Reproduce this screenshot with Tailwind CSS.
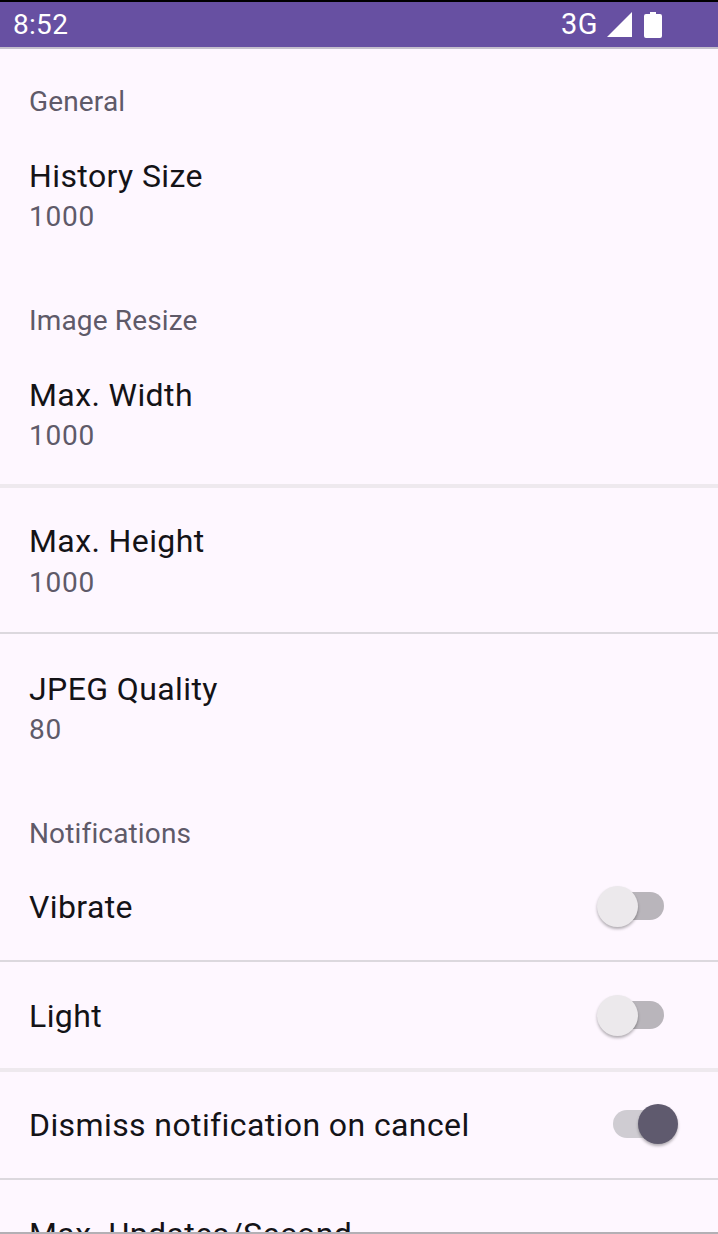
<!DOCTYPE html>
<html lang="en">
<head>
  <meta charset="UTF-8">
  <title>Settings</title>
  <script src="https://cdn.jsdelivr.net/npm/@tailwindcss/browser@4"></script>
</head>
<body class="relative h-[1234px] overflow-hidden bg-[#fef7ff] font-['Roboto',sans-serif]">

  <!-- Status bar -->
  <div class="h-[49px] border-t-2 border-b-2 border-t-black border-b-[#c4bfcc] bg-[#6750a2] flex items-center pl-[13px] text-white text-[28px]">
    <span class="flex-1 tracking-[0.3px]">8:52</span>
    <span class="text-[29px] tracking-[0.5px]">3G</span>
    <svg class="ml-[9px]" width="26" height="26" viewBox="0 0 26 26"><path d="M25 0V25H0Z" fill="#fff"/></svg>
    <svg class="ml-[11px] mr-[56px]" width="18" height="26" viewBox="0 0 18 26"><path d="M6 0H12V2H16Q18 2 18 4V24Q18 26 16 26H2Q0 26 0 24V4Q0 2 2 2H6Z" fill="#fff"/></svg>
  </div>

  <!-- General -->
  <div class="h-[73px] pl-[29px] pt-[35px] text-[#5f5a69] text-[28px] leading-[36px] tracking-[0.15px]">General</div>
  <div class="h-[146px] pl-[29px] pt-[34px]">
    <div class="text-[#141317] text-[32px] leading-[40px] tracking-[0.4px]">History Size</div>
    <div class="mt-px text-[#5f5a69] text-[28px] leading-[40px] tracking-[0.8px]">1000</div>
  </div>

  <!-- Image Resize -->
  <div class="h-[73px] pl-[29px] pt-[35px] text-[#5f5a69] text-[28px] leading-[36px] tracking-[0.15px]">Image Resize</div>
  <div class="h-[143px] pl-[29px] pt-[34px]">
    <div class="text-[#141317] text-[32px] leading-[40px] tracking-[0.4px]">Max. Width</div>
    <div class="mt-px text-[#5f5a69] text-[28px] leading-[40px] tracking-[0.8px]">1000</div>
  </div>
  <div class="h-[4px] bg-[#eee9ee]"></div>
  <div class="h-[144px] pl-[29px] pt-[33px]">
    <div class="text-[#141317] text-[32px] leading-[40px] tracking-[0.4px]">Max. Height</div>
    <div class="mt-[2px] text-[#5f5a69] text-[28px] leading-[40px] tracking-[0.8px]">1000</div>
  </div>
  <div class="h-[2px] bg-[#dcd8de]"></div>
  <div class="h-[146px] pl-[29px] pt-[35px]">
    <div class="text-[#141317] text-[32px] leading-[40px] tracking-[0.4px]">JPEG Quality</div>
    <div class="mt-px text-[#5f5a69] text-[28px] leading-[40px] tracking-[0.8px]">80</div>
  </div>

  <!-- Notifications -->
  <div class="h-[73px] pl-[29px] pt-[36px] text-[#5f5a69] text-[28px] leading-[36px] tracking-[0.15px]">Notifications</div>
  <div class="h-[107px] pl-[29px] flex items-center justify-between">
    <span class="text-[#141317] text-[32px] tracking-[0.4px]">Vibrate</span>
    <div class="relative w-[51px] h-[28px] mr-[54px] -mt-[2px] rounded-full bg-[#b9b5bb]">
      <div class="absolute -left-[16px] -top-[6px] w-[41px] h-[41px] rounded-full bg-[#ece9ec] shadow-[0_2px_3px_rgba(0,0,0,0.3)]"></div>
    </div>
  </div>
  <div class="h-[2px] bg-[#dcd8de]"></div>
  <div class="h-[106px] pl-[29px] flex items-center justify-between">
    <span class="mt-[2px] text-[#141317] text-[32px] tracking-[0.4px]">Light</span>
    <div class="relative w-[51px] h-[28px] mr-[54px] rounded-full bg-[#b9b5bb]">
      <div class="absolute -left-[16px] -top-[6px] w-[41px] h-[41px] rounded-full bg-[#ece9ec] shadow-[0_2px_3px_rgba(0,0,0,0.3)]"></div>
    </div>
  </div>
  <div class="h-[4px] bg-[#eee9ee]"></div>
  <div class="h-[106px] pl-[29px] flex items-center justify-between">
    <span class="text-[#141317] text-[32px] tracking-[0.4px]">Dismiss notification on cancel</span>
    <div class="relative w-[51px] h-[28px] mr-[54px] -mt-[2px] rounded-full bg-[#cfccd2]">
      <div class="absolute left-[25px] -top-[6px] w-[40px] h-[40px] rounded-full bg-[#5f5a6e] shadow-[0_2px_3px_rgba(0,0,0,0.3)]"></div>
    </div>
  </div>
  <div class="h-[2px] bg-[#dcd8de]"></div>
  <div class="pl-[29px] pt-[34px]">
    <div class="text-[#141317] text-[32px] leading-[40px] tracking-[0.4px]">Max. Updates/Second</div>
  </div>

  <!-- bottom edge of the window, over the cut off row -->
  <div class="absolute left-0 right-0 bottom-0 h-[2px] bg-[#b3b0b5]"></div>
</body>
</html>
